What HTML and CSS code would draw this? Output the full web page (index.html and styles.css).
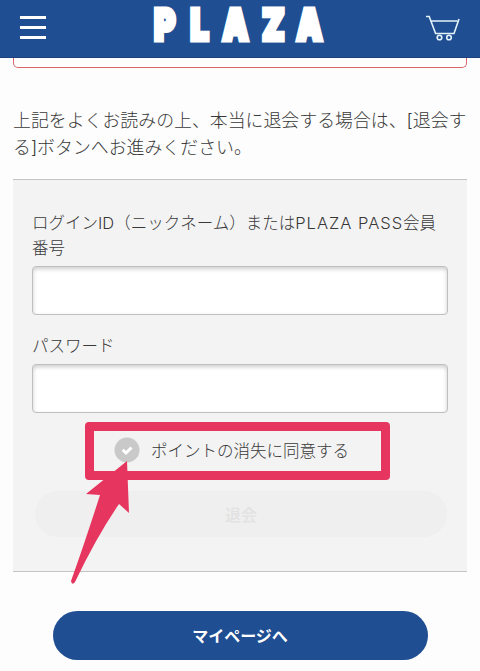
FILE: index.html
```html
<!DOCTYPE html>
<html lang="ja">
<head>
    <meta charset="UTF-8">
    <meta name="viewport" content="width=device-width, initial-scale=1.0">
    <title>PLAZA</title>
    <link rel="stylesheet" href="styles.css">
</head>
<body>
    <header class="header">
        <button class="menu-button">
            <span></span>
            <span></span>
            <span></span>
        </button>
        <svg class="logo" width="190" height="57" viewBox="0 0 190 57">
            <text transform="scale(0.76 1)" y="39.5" x="17.5 65 107.5 159.5 205">PLAZA</text>
        </svg>
        <svg class="cart" width="36" height="28" viewBox="0 0 36 28">
            <path d="M1 2.5h3.2l6.4 17h18.4L34 5M5.6 7h26.8"/>
            <circle cx="14.5" cy="23.5" r="2.3"/>
            <circle cx="24" cy="23.5" r="2.3"/>
        </svg>
    </header>

    <main class="content">
        <div class="notice"></div>
        <p class="lead">上記をよくお読みの上、本当に退会する場合は、[退会する]ボタンへお進みください。</p>

        <form class="form">
            <label class="label" for="login-id">ログインID（ニックネーム）または<span class="latin">PLAZA PASS</span>会員番号</label>
            <input class="input" type="text" id="login-id">
            <label class="label" for="password">パスワード</label>
            <input class="input" type="password" id="password">

            <div class="agree">
                <svg class="check" width="26" height="26" viewBox="0 0 26 26">
                    <circle cx="13" cy="13" r="12.5"/>
                    <path d="M8.7 12.8l3.2 3.2 5.6-5.4"/>
                </svg>
                <span>ポイントの消失に同意する</span>
                <svg class="arrow" width="64" height="126" viewBox="0 0 64 126">
                    <path d="M57 1L59 53 49 44Q27 76 5 122Q2 126 1 121Q15 82 30 35L16 34Z"/>
                </svg>
            </div>

            <button class="submit" type="button" disabled>退会</button>
        </form>

        <a class="mypage" href="#">マイページへ</a>
    </main>
</body>
</html>
```

FILE: styles.css
```css
* {
    box-sizing: border-box;
}

body {
    margin: 0;
    background: #fdfdfd;
    color: #383838;
    font-family: Inter, "Noto Sans CJK JP", sans-serif;
    font-weight: 300;
    overflow: hidden;
}

.header {
    display: flex;
    justify-content: space-between;
    align-items: flex-start;
    height: 58px;
    padding: 0 19px 0 20px;
    background: #1f4e92;
    border-bottom: 1px solid #1a417c;
}

.menu-button {
    display: flex;
    flex-direction: column;
    gap: 7.5px;
    width: 27px;
    margin: 16px 0 0;
    padding: 0;
    background: none;
    border: none;
}

.menu-button span {
    width: 26px;
    height: 2.7px;
    background: #fff;
}

.logo text {
    font-family: Inter, sans-serif;
    font-size: 42px;
    font-weight: 900;
    fill: #fff;
    stroke: #fff;
    stroke-width: 5;
}

.cart {
    margin-top: 14px;
    fill: none;
    stroke: #e4f3fb;
    stroke-width: 1.6;
}

.content {
    padding: 0 13px;
}

.notice {
    height: 10px;
    border: 1.5px solid #d9646c;
    border-top: none;
    border-radius: 0 0 5px 5px;
}

.lead {
    margin: 39px -4px 18px 0;
    font-size: 17.9px;
    line-height: 27px;
}

.form {
    height: 393px;
    padding: 31px 19px 0;
    background: #f3f3f3;
    border-top: 1px solid #c4c4c4;
    border-bottom: 1px solid #c4c4c4;
}

.label {
    display: block;
    font-size: 16.5px;
    line-height: 25px;
}

.latin {
    letter-spacing: 1px;
}

.input {
    display: block;
    width: 100%;
    height: 49px;
    margin: 5px 0 19px;
    padding: 0 12px;
    background: #fff;
    border: 1px solid #bfbfbf;
    border-radius: 4px;
    box-shadow: inset 0 2px 4px rgba(0, 0, 0, 0.2);
}

.agree {
    position: relative;
    display: flex;
    align-items: center;
    gap: 11px;
    width: 305px;
    height: 58px;
    margin: -10px 0 11px 53px;
    padding: 0 0 2px 20px;
    border: 9px solid #e6365f;
    border-radius: 4px;
    font-size: 16.5px;
}

.check circle {
    fill: #c9c9c9;
}

.check path {
    fill: none;
    stroke: #fff;
    stroke-width: 3;
}

/* pointer over the checkbox */
.arrow {
    position: absolute;
    left: -24px;
    top: 29px;
    fill: #e6365f;
}

.submit {
    display: block;
    width: 412px;
    height: 46px;
    margin-left: 3px;
    background: #efefef;
    border: none;
    border-radius: 23px;
    color: #e2e2e2;
    font-family: inherit;
    font-size: 16px;
    font-weight: 500;
}

.mypage {
    display: flex;
    justify-content: center;
    align-items: center;
    width: 375px;
    height: 49px;
    margin: 39px auto 0;
    padding-bottom: 2px;
    background: #1f4e92;
    border-radius: 25px;
    color: #fff;
    font-size: 16px;
    font-weight: bold;
    text-decoration: none;
}
```
